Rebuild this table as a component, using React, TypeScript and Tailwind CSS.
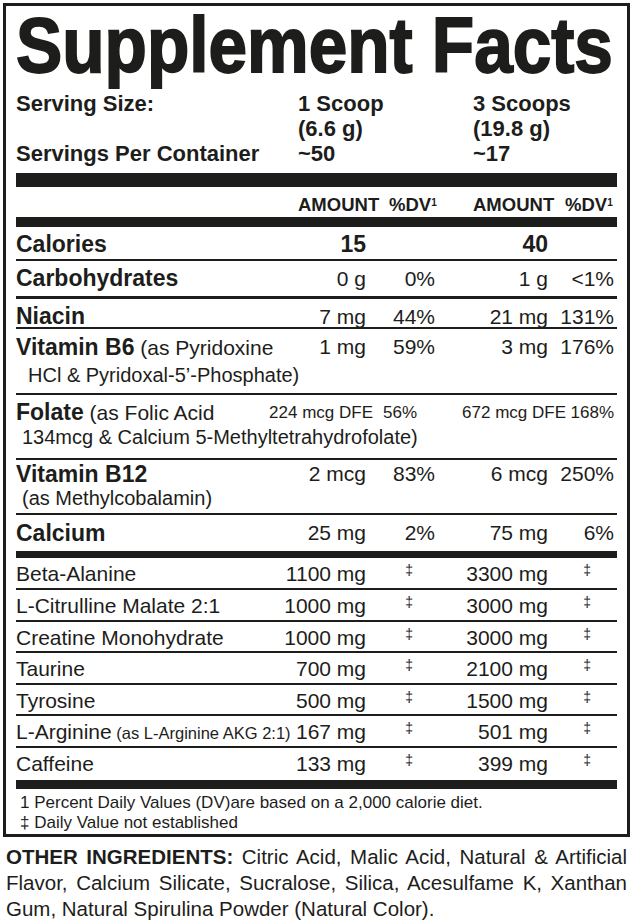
const ink = 'text-[#1d1d1b]';

type Cell = string | null;

interface Row {
  label: string;
  bold?: boolean;
  values: [Cell, Cell, Cell, Cell];
  h: string;
  border: string;
}

// nutrient rows above the ingredient bar
const nutrients: Row[] = [
  { label: 'Calories', bold: true, values: ['15', null, '40', null], h: 'h-[32px]', border: 'border-b-2' },
  { label: 'Carbohydrates', bold: true, values: ['0 g', '0%', '1 g', '<1%'], h: 'h-[35px]', border: 'border-b-[3px]' },
  { label: 'Niacin', bold: true, values: ['7 mg', '44%', '21 mg', '131%'], h: 'h-[28px]', border: 'border-b-2' },
];

const blend: [string, string, string, string?][] = [
  ['Beta-Alanine', '1100 mg', '3300 mg'],
  ['L-Citrulline Malate 2:1', '1000 mg', '3000 mg'],
  ['Creatine Monohydrate', '1000 mg', '3000 mg'],
  ['Taurine', '700 mg', '2100 mg'],
  ['Tyrosine', '500 mg', '1500 mg'],
  ['L-Arginine', '167 mg', '501 mg', '(as L-Arginine AKG 2:1)'],
  ['Caffeine', '133 mg', '399 mg'],
];

const cols = 'grid grid-cols-[minmax(0,1fr)_90px_69px_113px_69px]';

function Values({ values, boldVals }: { values: [Cell, Cell, Cell, Cell]; boldVals?: boolean }) {
  const cls = boldVals ? 'font-bold text-[23px]' : 'text-[21px]';
  return (
    <>
      <div className={`text-right whitespace-nowrap ${cls}`}>{values[0]}</div>
      <div className={`text-right whitespace-nowrap ${cls}`}>{values[1]}</div>
      <div className={`text-right whitespace-nowrap ${cls}`}>{values[2]}</div>
      <div className={`text-right whitespace-nowrap pr-[3px] ${cls}`}>{values[3]}</div>
    </>
  );
}

function Dagger({ pr }: { pr: string }) {
  return (
    <div className={`flex justify-end self-start pt-[5px] ${pr}`}>
      <span className="text-[14px] leading-none">‡</span>
    </div>
  );
}

export default function App() {
  return (
    <div className={`w-[633px] h-[922px] bg-white ${ink} font-['Liberation_Sans',Arial,sans-serif] pt-[3px] overflow-hidden`}>
      <div className="mx-[3px] h-[834px] border-[3px] border-[#1d1d1b] px-[10px] pt-[1px]">
        {/* Title */}
        <h1 className="h-[77px] text-[77px] leading-[77px] font-bold whitespace-nowrap origin-left scale-x-90 [-webkit-text-stroke:1.8px_#1d1d1b]">
          Supplement Facts
        </h1>

        {/* Serving info */}
        <div className="mt-[7px] grid grid-cols-[282px_175px_1fr] text-[22px] leading-[25px] font-bold">
          <div>Serving Size:</div>
          <div>1 Scoop</div>
          <div>3 Scoops</div>
          <div></div>
          <div>(6.6 g)</div>
          <div>(19.8 g)</div>
          <div>Servings Per Container</div>
          <div>~50</div>
          <div>~17</div>
        </div>

        <div className="mt-[7px] h-[14px] bg-[#1d1d1b]" />

        {/* Column headings */}
        <div className="h-[30px] pt-[8px] flex text-[18.5px] leading-[20px] font-bold whitespace-nowrap">
          <div className="w-[282px]" />
          <div className="w-[91px]">AMOUNT</div>
          <div className="w-[84px]">
            %DV<sup className="text-[10px]">1</sup>
          </div>
          <div className="w-[92px]">AMOUNT</div>
          <div>
            %DV<sup className="text-[10px]">1</sup>
          </div>
        </div>

        <div className="h-[10px] bg-[#1d1d1b]" />

        {nutrients.map((r) => (
          <div key={r.label} className={`${cols} items-center ${r.h} box-content ${r.border} border-[#1d1d1b]`}>
            <div className="font-bold text-[23px] whitespace-nowrap">{r.label}</div>
            <Values values={r.values} boldVals={r.label === 'Calories'} />
          </div>
        ))}

        {/* Vitamin B6 */}
        <div className="h-[64px] box-content border-b-2 border-[#1d1d1b]">
          <div className={`${cols} items-center h-[36px]`}>
            <div className="whitespace-nowrap">
              <span className="font-bold text-[23px]">Vitamin B6</span>
              <span className="text-[21px]"> (as Pyridoxine</span>
            </div>
            <Values values={['1 mg', '59%', '3 mg', '176%']} />
          </div>
          <div className="pl-[12px] text-[20px] leading-[20px] whitespace-nowrap">HCl &amp; Pyridoxal-5’-Phosphate)</div>
        </div>

        {/* Folate */}
        <div className="h-[63px] box-content border-b-2 border-[#1d1d1b]">
          <div className="grid grid-cols-[minmax(0,1fr)_120px_44px_149px_51px] items-center h-[32px]">
            <div className="whitespace-nowrap">
              <span className="font-bold text-[23px]">Folate</span>
              <span className="text-[21px]"> (as Folic Acid</span>
            </div>
            <div className="text-right text-[17px] whitespace-nowrap">224 mcg DFE</div>
            <div className="text-right text-[17px]">56%</div>
            <div className="text-right text-[17px] whitespace-nowrap">672 mcg DFE</div>
            <div className="text-right text-[17px] pr-[3px]">168%</div>
          </div>
          <div className="pl-[6px] text-[20px] leading-[20px] whitespace-nowrap">134mcg &amp; Calcium 5-Methyltetrahydrofolate)</div>
        </div>

        {/* Vitamin B12 */}
        <div className="h-[53px] box-content border-b-2 border-[#1d1d1b]">
          <div className={`${cols} items-center h-[28px] leading-[24px]`}>
            <div className="font-bold text-[23px] whitespace-nowrap">Vitamin B12</div>
            <Values values={['2 mcg', '83%', '6 mcg', '250%']} />
          </div>
          <div className="pl-[6px] text-[20px] leading-[20px] whitespace-nowrap">(as Methylcobalamin)</div>
        </div>

        {/* Calcium */}
        <div className={`${cols} items-center h-[36px]`}>
          <div className="font-bold text-[23px]">Calcium</div>
          <Values values={['25 mg', '2%', '75 mg', '6%']} />
        </div>

        <div className="h-[7px] bg-[#1d1d1b]" />

        {blend.map(([name, a, b, note], i) => (
          <div
            key={name}
            className={`${cols} items-center ${i === 0 ? 'h-[30px]' : i === blend.length - 1 ? 'h-[32px]' : 'h-[29.5px]'} box-content ${i < blend.length - 1 ? 'border-b-2' : ''} border-[#1d1d1b]`}
          >
            <div className="text-[21px] whitespace-nowrap">
              {name}
              {note && <span className="text-[16.5px]"> {note}</span>}
            </div>
            <div className="text-right text-[21px] whitespace-nowrap">{a}</div>
            <Dagger pr="pr-[22px]" />
            <div className="text-right text-[21px] whitespace-nowrap">{b}</div>
            <Dagger pr="pr-[26px]" />
          </div>
        ))}

        <div className="h-[9px] bg-[#1d1d1b]" />

        {/* Footnotes */}
        <div className="pt-[4px] pl-[4px] text-[17px] leading-[20px]">
          <div>1 Percent Daily Values (DV)are based on a 2,000 calorie diet.</div>
          <div>‡ Daily Value not established</div>
        </div>
      </div>

      {/* Other ingredients */}
      <div className="mt-[7px] px-[6px] text-[20.5px] leading-[26px]">
        <div className="[text-align-last:justify] whitespace-nowrap">
          <span className="font-bold">OTHER INGREDIENTS:</span> Citric Acid, Malic Acid, Natural &amp; Artificial
        </div>
        <div className="[text-align-last:justify] whitespace-nowrap">
          Flavor, Calcium Silicate, Sucralose, Silica, Acesulfame K, Xanthan
        </div>
        <div>Gum, Natural Spirulina Powder (Natural Color).</div>
      </div>
    </div>
  );
}
